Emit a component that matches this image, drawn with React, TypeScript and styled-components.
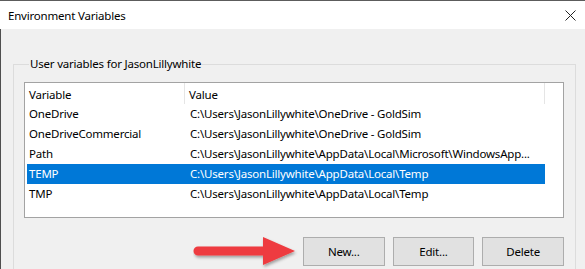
import styled, { createGlobalStyle } from 'styled-components';

const GlobalStyle = createGlobalStyle`
  html, body {
    margin: 0;
    padding: 0;
    background: #f0f0f0;
  }
  body {
    font-family: "Noto Sans", "Open Sans", sans-serif;
    font-size: 11.5px;
    letter-spacing: -0.2px;
    color: #000;
  }
`;

const Window = styled.div`
  width: 585px;
  height: 269px;
  overflow: hidden;
  background: #f0f0f0;
  border-top: 1px solid #5c5c5c;
  box-sizing: border-box;
  display: flex;
  flex-direction: column;
`;

const TitleBar = styled.div`
  height: 28px;
  flex: none;
  background: #fff;
  display: flex;
  align-items: center;
  justify-content: space-between;
  padding: 1px 9px 0 8px;
  box-sizing: border-box;
`;

const Body = styled.div`
  flex: 1;
  border-left: 1px solid #4f4f4f;
  padding: 27px 9px 0 12px;
`;

const GroupBox = styled.fieldset`
  margin: 0;
  padding: 0 10px;
  min-width: 0;
  border: 1px solid #dcdcdc;
  height: 260px;
`;

const Legend = styled.legend`
  margin-left: 5px;
  padding: 0 1px;
  line-height: 16px;
`;

const ListView = styled.div`
  margin-top: 10px;
  width: 540px;
  height: 136px;
  box-sizing: border-box;
  border: 1px solid #a3a3a3;
  background: #fff;
`;

const Header = styled.div`
  display: grid;
  grid-template-columns: 160px 360px;
  height: 21px;
`;

const HeaderCell = styled.div`
  padding: 2px 0 0 4px;
  border-right: 1px solid #e5e5e5;
  line-height: 19px;
`;

const Row = styled.div<{ $selected?: boolean }>`
  display: grid;
  grid-template-columns: 158px 360px;
  margin-left: 2px;
  width: 518px;
  height: 20px;
  line-height: 20px;
  background: ${p => (p.$selected ? '#0078d7' : 'transparent')};
  color: ${p => (p.$selected ? '#fff' : '#000')};
`;

const Cell = styled.div<{ $value?: boolean }>`
  padding-left: ${p => (p.$value ? '5px' : '2px')};
  white-space: nowrap;
  overflow: hidden;
`;

const ButtonRow = styled.div`
  display: flex;
  align-items: center;
  margin-top: 15px;
  width: 540px;
`;

const Arrow = styled.svg`
  margin-left: 169px;
  margin-right: 2px;
  flex: none;
`;

const Button = styled.button`
  width: 82px;
  height: 29px;
  margin-left: 8px;
  background: #e1e1e1;
  border: 1px solid #adadad;
  font-family: inherit;
  font-size: 11.5px;
  letter-spacing: -0.2px;
  color: #000;
  padding: 0;
  &:first-of-type {
    margin-left: 0;
  }
`;

type EnvVar = { name: string, value: string };

const vars: EnvVar[] = [
  { name: 'OneDrive', value: 'C:\\Users\\JasonLillywhite\\OneDrive - GoldSim' },
  { name: 'OneDriveCommercial', value: 'C:\\Users\\JasonLillywhite\\OneDrive - GoldSim' },
  { name: 'Path', value: 'C:\\Users\\JasonLillywhite\\AppData\\Local\\Microsoft\\WindowsApp...' },
  { name: 'TEMP', value: 'C:\\Users\\JasonLillywhite\\AppData\\Local\\Temp' },
  { name: 'TMP', value: 'C:\\Users\\JasonLillywhite\\AppData\\Local\\Temp' },
];

const App = () => {
  return (
    <>
      <GlobalStyle />
      <Window>
        <TitleBar>
          <span>Environment Variables</span>
          <svg width="11" height="11" viewBox="0 0 11 11">
            <path d="M0.5 0.5 L10.5 10.5 M10.5 0.5 L0.5 10.5" stroke="#222" strokeWidth="1" />
          </svg>
        </TitleBar>
        <Body>
          <GroupBox>
            <Legend>User variables for JasonLillywhite</Legend>
            <ListView>
              <Header>
                <HeaderCell>Variable</HeaderCell>
                <HeaderCell>Value</HeaderCell>
              </Header>
              {vars.map(v => (
                <Row key={v.name} $selected={v.name === 'TEMP'}>
                  <Cell>{v.name}</Cell>
                  <Cell $value>{v.value}</Cell>
                </Row>
              ))}
            </ListView>
            <ButtonRow>
              <Arrow width="108" height="36" viewBox="0 0 108 36">
                <defs>
                  <filter id="shadow" x="-10%" y="-30%" width="130%" height="170%">
                    <feDropShadow dx="1" dy="2" stdDeviation="1.5" floodColor="#000" floodOpacity="0.35" />
                  </filter>
                </defs>
                <path
                  d="M5 13.5 L70 13.5 L70 4 L102 18 L70 32 L70 22.5 L5 22.5 A4.5 4.5 0 0 1 5 13.5 Z"
                  fill="#ee3b3f"
                  filter="url(#shadow)"
                />
              </Arrow>
              <Button>New...</Button>
              <Button>Edit...</Button>
              <Button>Delete</Button>
            </ButtonRow>
          </GroupBox>
        </Body>
      </Window>
    </>
  );
};

export default App;
